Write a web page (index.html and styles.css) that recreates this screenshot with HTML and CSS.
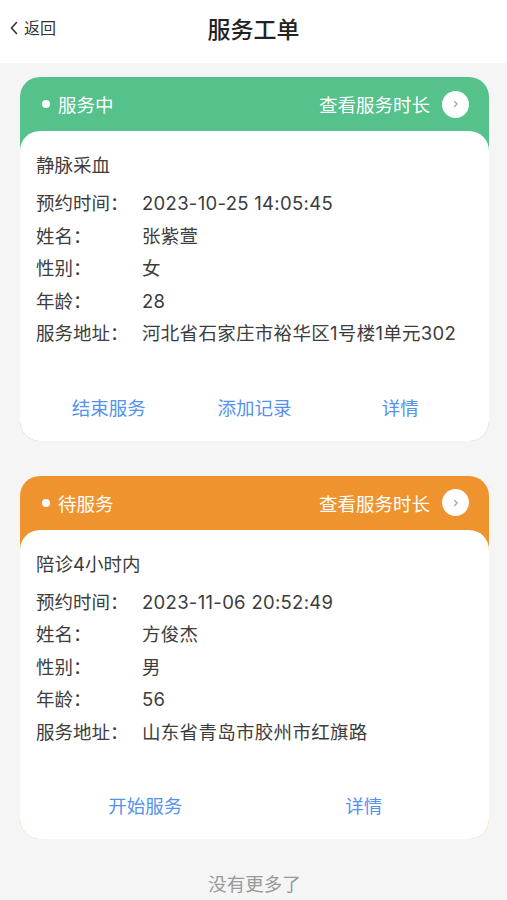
FILE: index.html
```html
<!DOCTYPE html>
<html lang="zh-CN">

<head>
  <meta charset="UTF-8">
  <meta name="viewport" content="width=device-width, initial-scale=1.0">
  <title>服务工单</title>
  <link rel="stylesheet" href="styles.css">
</head>

<body>
  <header class="nav-bar">
    <a class="back-btn" href="#">
      <svg class="back-icon" viewBox="0 0 8 14" width="8" height="14">
        <path d="M6.5 1.5 L1.5 7 L6.5 12.5" fill="none" stroke="#333" stroke-width="1.6" stroke-linecap="round" stroke-linejoin="round" />
      </svg>
      <span>返回</span>
    </a>
    <h1 class="nav-title">服务工单</h1>
  </header>

  <main class="order-list">
    <div class="order-card status-serving">
      <div class="card-head">
        <span class="status"><i class="status-dot"></i>服务中</span>
        <a class="duration-link" href="#">
          查看服务时长
          <span class="arrow-circle">
            <svg viewBox="0 0 8 10" width="6" height="8">
              <path d="M2 1.5 L5.5 5 L2 8.5" fill="none" stroke="#8fa0a8" stroke-width="1.6" stroke-linecap="round" stroke-linejoin="round" />
            </svg>
          </span>
        </a>
      </div>
      <div class="card-body">
        <div class="service-name">静脉采血</div>
        <div class="info-row"><span class="label">预约时间：</span><span class="value">2023-10-25 14:05:45</span></div>
        <div class="info-row"><span class="label">姓名：</span><span class="value">张紫萱</span></div>
        <div class="info-row"><span class="label">性别：</span><span class="value">女</span></div>
        <div class="info-row"><span class="label">年龄：</span><span class="value">28</span></div>
        <div class="info-row"><span class="label">服务地址：</span><span class="value">河北省石家庄市裕华区1号楼1单元302</span></div>
        <div class="actions">
          <a class="action-btn" href="#">结束服务</a>
          <a class="action-btn" href="#">添加记录</a>
          <a class="action-btn" href="#">详情</a>
        </div>
      </div>
    </div>

    <div class="order-card status-waiting">
      <div class="card-head">
        <span class="status"><i class="status-dot"></i>待服务</span>
        <a class="duration-link" href="#">
          查看服务时长
          <span class="arrow-circle">
            <svg viewBox="0 0 8 10" width="6" height="8">
              <path d="M2 1.5 L5.5 5 L2 8.5" fill="none" stroke="#8fa0a8" stroke-width="1.6" stroke-linecap="round" stroke-linejoin="round" />
            </svg>
          </span>
        </a>
      </div>
      <div class="card-body">
        <div class="service-name">陪诊4小时内</div>
        <div class="info-row"><span class="label">预约时间：</span><span class="value">2023-11-06 20:52:49</span></div>
        <div class="info-row"><span class="label">姓名：</span><span class="value">方俊杰</span></div>
        <div class="info-row"><span class="label">性别：</span><span class="value">男</span></div>
        <div class="info-row"><span class="label">年龄：</span><span class="value">56</span></div>
        <div class="info-row"><span class="label">服务地址：</span><span class="value">山东省青岛市胶州市红旗路</span></div>
        <div class="actions">
          <a class="action-btn" href="#">开始服务</a>
          <a class="action-btn" href="#">详情</a>
        </div>
      </div>
    </div>

    <p class="no-more">没有更多了</p>
  </main>
</body>

</html>
```

FILE: styles.css
```css
body {
  font-family: Inter, 'Noto Sans CJK SC', sans-serif;
  margin: 0;
  padding: 0;
  background-color: #f5f5f5;
  color: #3d3d3d;
}

a {
  text-decoration: none;
}

.nav-bar {
  background-color: white;
  height: 63px;
  display: flex;
  align-items: center;
  justify-content: center;
  position: relative;
}

.back-btn {
  position: absolute;
  left: 10px;
  top: 17px;
  display: flex;
  align-items: center;
  gap: 6px;
  color: #333;
  font-size: 16px;
  line-height: 22px;
}

.nav-title {
  margin: 0 0 7px;
  font-size: 23px;
  font-weight: 500;
  color: #222;
}

.order-list {
  padding: 14px 18px 0 20px;
}

.order-card {
  border-radius: 20px;
  overflow: hidden;
  margin-bottom: 35px;
}

.status-serving {
  background-color: #55c18b;
}

.status-waiting {
  background-color: #ef932e;
}

.card-head {
  height: 54px;
  display: flex;
  align-items: center;
  justify-content: space-between;
  padding: 0 20px 0 22px;
  color: white;
  font-size: 18.5px;
}

.status {
  display: flex;
  align-items: center;
  gap: 8px;
}

.status-dot {
  width: 8px;
  height: 8px;
  border-radius: 50%;
  background-color: white;
}

.duration-link {
  display: flex;
  align-items: center;
  gap: 12px;
  color: white;
}

.arrow-circle {
  width: 27px;
  height: 27px;
  border-radius: 50%;
  background-color: white;
  display: flex;
  align-items: center;
  justify-content: center;
}

.card-body {
  background-color: white;
  border-radius: 20px 20px 0 0;
  padding: 18px 16px 13px;
  font-size: 18.5px;
}

.service-name {
  line-height: 32px;
  margin-bottom: 6px;
}

.info-row {
  display: flex;
  line-height: 32.5px;
}

.label {
  width: 106px;
  flex-shrink: 0;
}

.value {
  letter-spacing: 0.3px;
}

.actions {
  display: flex;
  margin-top: 38px;
}

.action-btn {
  flex: 1;
  text-align: center;
  line-height: 40px;
  color: #5392ee;
}

.no-more {
  margin: -2px 0 0;
  text-align: center;
  color: #999;
  font-size: 18.5px;
  line-height: 24px;
}
```
